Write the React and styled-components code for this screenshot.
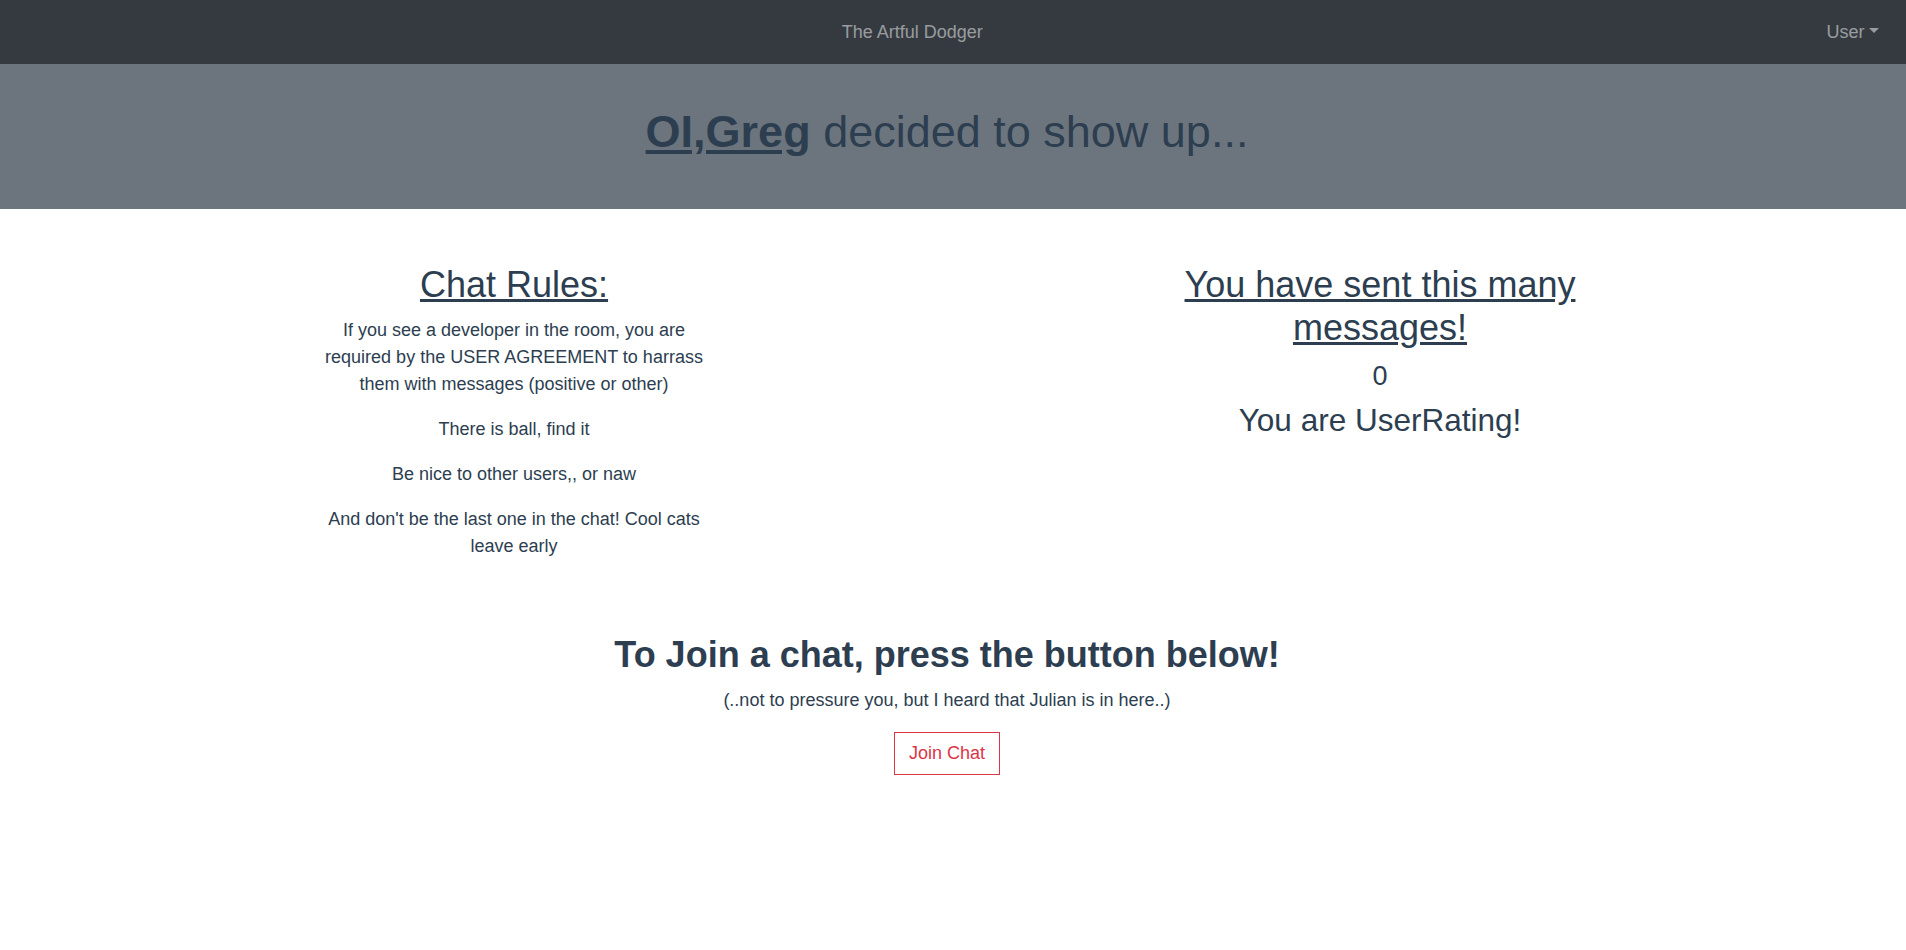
import React from 'react';
import styled, {createGlobalStyle} from 'styled-components';

const GlobalStyle = createGlobalStyle`
  html {
    font-size: 18px;
  }
  body {
    margin: 0;
    background: #ffffff;
    color: #2c3e50;
    font-family: "Liberation Sans", Arial, Helvetica, sans-serif;
    line-height: 1.5;
  }
  h1, h2, h3, h4, p {
    margin-top: 0;
  }
`;

const rules = [
  'If you see a developer in the room, you are required by the USER AGREEMENT to harrass them with messages (positive or other)',
  'There is ball, find it',
  'Be nice to other users,, or naw',
  "And don't be the last one in the chat! Cool cats leave early",
];

const App = () => {
  return (
    <>
      <GlobalStyle/>
      <NavBar>
        <Brand href="#">The Artful Dodger</Brand>
        <UserToggle href="#">User</UserToggle>
      </NavBar>

      <Hero>
        <HeroTitle>
          <NameLink href="#">OI,Greg</NameLink> decided to show up...
        </HeroTitle>
      </Hero>

      <Main>
        <Columns>
          <Column>
            <ColumnTitle>Chat Rules:</ColumnTitle>
            {rules.map((rule, i) => (
              <Rule key={i}>{rule}</Rule>
            ))}
          </Column>
          <Column>
            <ColumnTitle>You have sent this many messages!</ColumnTitle>
            <Count>0</Count>
            <Rating>You are UserRating!</Rating>
          </Column>
        </Columns>

        <JoinSection>
          <JoinTitle>To Join a chat, press the button below!</JoinTitle>
          <JoinNote>(..not to pressure you, but I heard that Julian is in here..)</JoinNote>
          <JoinButton type="button">Join Chat</JoinButton>
        </JoinSection>
      </Main>
    </>
  );
};

export default App;

const NavBar = styled.nav`
  display: flex;
  align-items: center;
  background: #343a40;
  padding: 10px 18px 9px;
`;

const Brand = styled.a`
  margin: 0 auto;
  padding: 9px 20px 9px 9px;
  font-size: 18px;
  line-height: 27px;
  color: rgba(255, 255, 255, 0.5);
  text-decoration: none;
`;

const UserToggle = styled.a`
  padding: 9px;
  font-size: 18px;
  line-height: 27px;
  color: rgba(255, 255, 255, 0.5);
  text-decoration: none;

  &::after {
    content: "";
    display: inline-block;
    margin-left: 0.255em;
    vertical-align: 0.255em;
    border-top: 0.3em solid;
    border-right: 0.3em solid transparent;
    border-left: 0.3em solid transparent;
  }
`;

const Hero = styled.header`
  background: #6c757d;
  padding: 41px 12px 41px 0;
  text-align: center;
`;

const HeroTitle = styled.h1`
  margin: 0 0 9px;
  font-size: 45px;
  line-height: 1.2;
  font-weight: 400;
  color: #2c3e50;
`;

const NameLink = styled.a`
  font-weight: 700;
  color: #2c3e50;
  text-decoration: underline;
`;

const Main = styled.main`
  padding: 54px 12px 0 0;
`;

const Columns = styled.div`
  display: flex;
  justify-content: center;
  gap: 466px;
`;

const Column = styled.section`
  width: 400px;
  text-align: center;
`;

const ColumnTitle = styled.h2`
  margin: 0 0 11px;
  font-size: 36px;
  line-height: 1.2;
  font-weight: 400;
  text-decoration: underline;
`;

const Rule = styled.p`
  margin: 0 0 18px;
  font-size: 18px;
  line-height: 27px;
`;

const Count = styled.h4`
  margin: 0 0 9px;
  font-size: 27px;
  line-height: 1.2;
  font-weight: 400;
`;

const Rating = styled.h3`
  margin: 0 0 9px;
  font-size: 31.5px;
  line-height: 1.2;
  font-weight: 400;
`;

const JoinSection = styled.section`
  display: flex;
  flex-direction: column;
  align-items: center;
  margin-top: 55px;
  text-align: center;
`;

const JoinTitle = styled.h2`
  margin: 0 0 11px;
  font-size: 36px;
  line-height: 1.2;
  font-weight: 700;
`;

const JoinNote = styled.p`
  margin: 0 0 18px;
  font-size: 18px;
  line-height: 27px;
`;

const JoinButton = styled.button`
  font-family: inherit;
  font-size: 18px;
  line-height: 27px;
  padding: 6.75px 13.5px;
  color: #dc3545;
  background: transparent;
  border: 1px solid #dc3545;
  border-radius: 0;
  cursor: pointer;
`;
